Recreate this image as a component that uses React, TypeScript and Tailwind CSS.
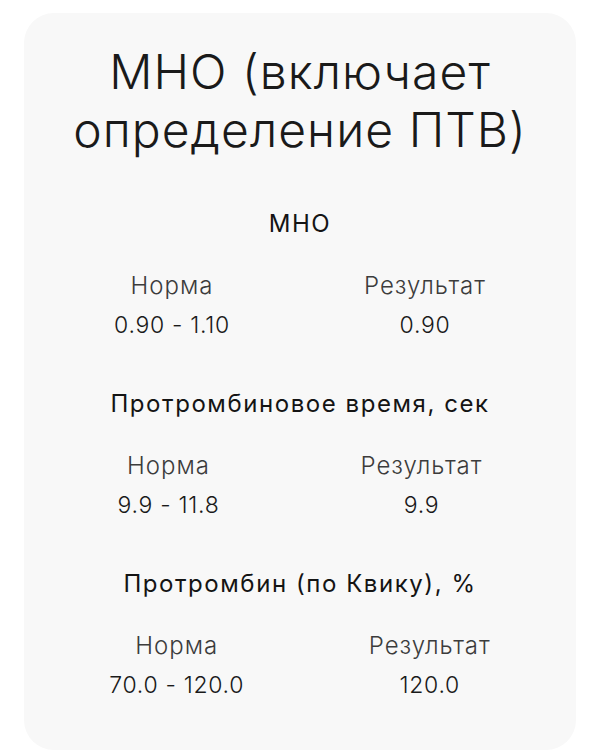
const sections = [
  { title: "МНО", norm: "0.90 - 1.10", result: "0.90" },
  { title: "Протромбиновое время, сек", norm: "9.9 - 11.8", result: "9.9" },
  { title: "Протромбин (по Квику), %", norm: "70.0 - 120.0", result: "120.0" },
];

function Section({ title, norm, result }: { title: string; norm: string; result: string }) {
  return (
    <div className="flex flex-col">
      <div className="text-center text-[24px] leading-[32px] font-normal tracking-[0.065em] text-[#141414]">{title}</div>
      <div className="mt-[30px] flex justify-around">
        <div className="flex flex-col items-center">
          <div className="text-[24px] leading-[32px] font-light tracking-[0.04em] text-[#3c3c3c]">Норма</div>
          <div className="mt-[7px] text-[23px] leading-[32px] font-light tracking-[0.03em] text-[#1a1a1a]">{norm}</div>
        </div>
        <div className="flex flex-col items-center">
          <div className="text-[24px] leading-[32px] font-light tracking-[0.04em] text-[#3c3c3c]">Результат</div>
          <div className="mt-[7px] text-[23px] leading-[32px] font-light tracking-[0.03em] text-[#1a1a1a]">{result}</div>
        </div>
      </div>
    </div>
  );
}

export default function App() {
  return (
    <div className="min-h-screen bg-white pt-[13px] px-6" style={{ fontFamily: "Inter, 'Noto Sans', sans-serif" }}>
      <div className="h-[737px] rounded-[30px] bg-[#f8f8f8] px-[23px] pt-[30px]">
        <h1 className="text-center text-[48px] leading-[58px] font-light tracking-[0.022em] text-[#1a1a1a]">
          МНО (включает
          <br />
          определение ПТВ)
        </h1>
        <div className="mt-[49px] flex flex-col gap-[47px]">
          {sections.map((s) => (
            <Section key={s.title} {...s} />
          ))}
        </div>
      </div>
    </div>
  );
}
